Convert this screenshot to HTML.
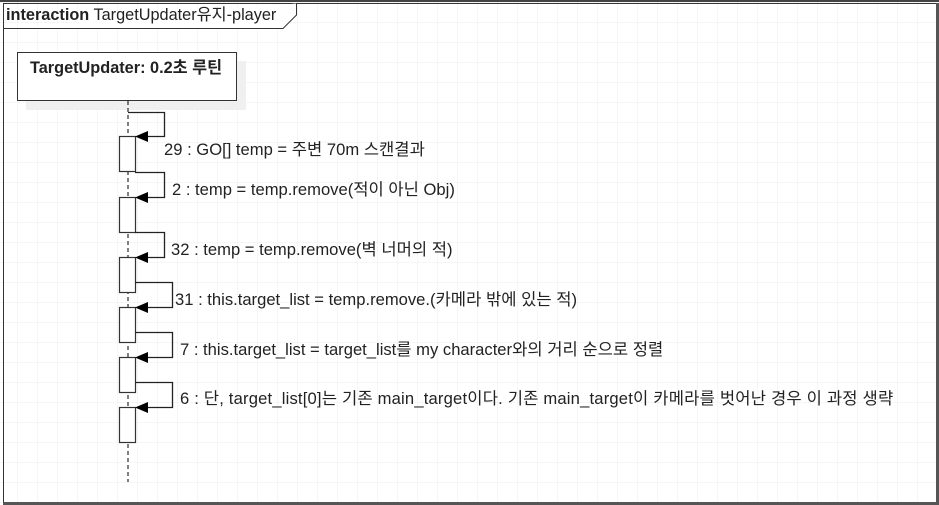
<!DOCTYPE html>
<html><head><meta charset="utf-8"><style>
html,body{margin:0;padding:0;background:#fff;}
body{width:939px;height:505px;overflow:hidden;position:relative;font-family:"Liberation Sans","Noto Sans CJK KR",sans-serif;}
.t{position:absolute;font-size:16.6px;color:#222;white-space:nowrap;line-height:18px;}
</style></head><body>
<svg width="939" height="505" style="position:absolute;left:0;top:0">
<defs>
<pattern id="g" x="17" y="2" width="20" height="20" patternUnits="userSpaceOnUse">
<path d="M0 0H20M0 0V20" stroke="#ececec" stroke-width="1" fill="none"/>
</pattern>
</defs>
<rect x="0" y="0" width="939" height="505" fill="url(#g)"/>
<rect x="0" y="0" width="939" height="2" fill="#444"/>
<rect x="3.5" y="3.5" width="933" height="499" fill="none" stroke="#333" stroke-width="1"/>
<rect x="936" y="3" width="3" height="500" fill="#555"/>
<rect x="3" y="502" width="936" height="3" fill="#555"/>
<path d="M3.5 28.5H283L296.5 15V3.5" fill="#fff" stroke="#333"/>
<rect x="26" y="61" width="220" height="49" fill="#f0f0f0"/>
<rect x="17.5" y="52.5" width="219" height="48" fill="#fff" stroke="#333"/>
<line x1="128" y1="101" x2="128" y2="482" stroke="#000" stroke-dasharray="4,3"/>
<g fill="#fff" stroke="#333" stroke-width="1.2">
<rect x="119.5" y="136.5" width="16" height="35"/>
<rect x="119.5" y="197.5" width="16" height="35"/>
<rect x="119.5" y="257.5" width="16" height="35"/>
<rect x="119.5" y="307.5" width="16" height="35"/>
<rect x="119.5" y="357.5" width="16" height="35"/>
<rect x="119.5" y="407.5" width="16" height="35"/>
</g>
<g fill="none" stroke="#222" stroke-width="1.3">
<path d="M128 112.5H164.5V136.5H140"/>
<path d="M135 172.5H164.5V197.5H140"/>
<path d="M135 232.5H164.5V257.5H140"/>
<path d="M135 282.5H172.5V307.5H140"/>
<path d="M135 332.5H172.5V357.5H140"/>
<path d="M135 382.5H172.5V407.5H140"/>
</g>
<g fill="#000">
<path d="M135 136.5L148 131V142Z"/>
<path d="M135 197.5L148 192V203Z"/>
<path d="M135 257.5L148 252V263Z"/>
<path d="M135 307.5L148 302V313Z"/>
<path d="M135 357.5L148 352V363Z"/>
<path d="M135 407.5L148 402V413Z"/>
</g>
</svg>
<div class="t" style="left:6px;top:6px;font-size:16.3px"><b>interaction</b> TargetUpdater유지-player</div>
<div class="t" style="left:30px;top:59px;font-weight:bold;font-size:16.3px">TargetUpdater: 0.2초 루틴</div>
<div class="t" style="left:164px;top:141px">29 : GO[] temp = 주변 70m 스캔결과</div>
<div class="t" style="left:172px;top:181px">2 : temp = temp.remove(적이 아닌 Obj)</div>
<div class="t" style="left:171px;top:241px">32 : temp = temp.remove(벽 너머의 적)</div>
<div class="t" style="left:175px;top:291px">31 : this.target_list = temp.remove.(카메라 밖에 있는 적)</div>
<div class="t" style="left:180px;top:341px">7 : this.target_list = target_list를 my character와의 거리 순으로 정렬</div>
<div class="t" style="left:180px;top:390px;letter-spacing:0.18px">6 : 단, target_list[0]는 기존 main_target이다. 기존 main_target이 카메라를 벗어난 경우 이 과정 생략</div>
</body></html>
